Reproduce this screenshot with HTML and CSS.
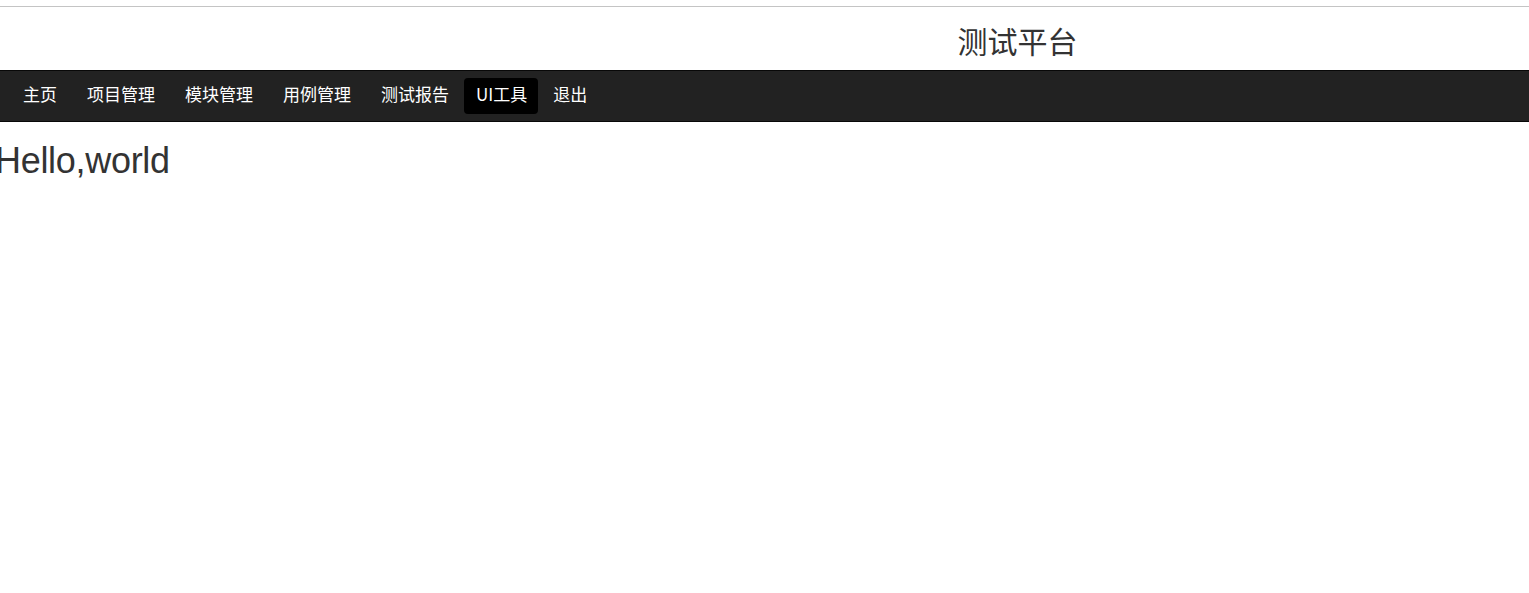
FILE: index.html
```html
<!DOCTYPE html>
<html lang="zh-CN">
<head>
    <meta charset="UTF-8">
    <meta name="viewport" content="width=device-width, initial-scale=1.0">
    <title>测试平台</title>
    <link rel="stylesheet" href="styles.css">
</head>
<body>

    <div class="top-line"></div>

    <header class="site-header">
        <h3 class="site-title">测试平台</h3>
    </header>

    <nav class="navbar">
        <ul class="nav-list">
            <li><a href="#">主页</a></li>
            <li><a href="#">项目管理</a></li>
            <li><a href="#">模块管理</a></li>
            <li><a href="#">用例管理</a></li>
            <li><a href="#">测试报告</a></li>
            <li class="active"><a href="#">UI工具</a></li>
            <li><a href="#">退出</a></li>
        </ul>
    </nav>

    <main class="content">
        <h1 class="greeting">Hello,world</h1>
    </main>

</body>
</html>
```

FILE: styles.css
```css
:root {
    --nav-background: #222222;
    --nav-border: #080808;
    --text-color: #333333;
    --line-color: #c4c4c4;
}

body {
    margin: 0;
    font-family: "Liberation Sans", "Noto Sans CJK SC", sans-serif;
    color: var(--text-color);
    background: #ffffff;
}

.top-line {
    margin-top: 6px;
    height: 1px;
    background-color: var(--line-color);
}

.site-header {
    height: 63px;
    display: flex;
    align-items: center;
    justify-content: center;
    padding-left: 506px;
}

.site-title {
    margin: 0;
    font-family: "Noto Sans CJK SC", sans-serif;
    font-weight: 400;
    font-size: 30px;
    line-height: 1;
    padding-top: 3px;
}

.navbar {
    background-color: var(--nav-background);
    border-top: 1px solid var(--nav-border);
    border-bottom: 1px solid var(--nav-border);
    height: 50px;
    padding: 0 8px;
}

.nav-list {
    list-style: none;
    margin: 0;
    padding: 0;
    height: 100%;
    display: flex;
    align-items: center;
}

.nav-list a {
    display: block;
    padding: 0 15px 4px;
    height: 32px;
    line-height: 32px;
    font-family: "Noto Sans CJK SC", sans-serif;
    font-size: 17px;
    color: #ffffff;
    text-decoration: none;
    border-radius: 4px;
}

.nav-list .active a {
    background-color: #000000;
    padding-left: 12px;
    padding-right: 11px;
}

.content {
    padding: 0;
}

.greeting {
    margin: 19px 0 0 -5px;
    font-size: 36px;
    font-weight: 400;
    line-height: 1.1;
    letter-spacing: -0.3px;
}
```
